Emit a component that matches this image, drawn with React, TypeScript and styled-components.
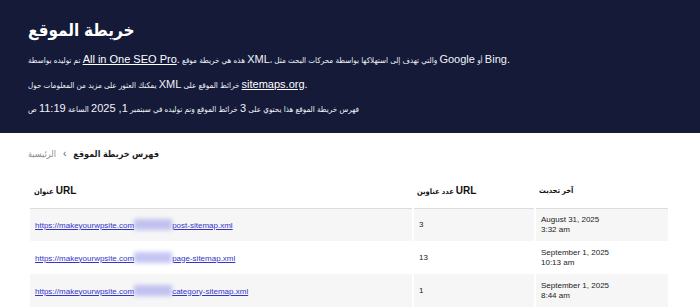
import styled, { createGlobalStyle } from "styled-components";

const GlobalStyle = createGlobalStyle`
  html, body {
    margin: 0;
    padding: 0;
    background: #ffffff;
  }
  body {
    font-family: "Liberation Sans", "DejaVu Sans Condensed", "DejaVu Sans", Arial, sans-serif;
    font-stretch: condensed;
    color: #1d1d1d;
  }
`;

type SitemapRow = {
  slug: string;
  count: number;
  date: string;
  time: string;
};

const rows: SitemapRow[] = [
  { slug: "post-sitemap.xml", count: 3, date: "August 31, 2025", time: "3:32 am" },
  { slug: "page-sitemap.xml", count: 13, date: "September 1, 2025", time: "10:13 am" },
  { slug: "category-sitemap.xml", count: 1, date: "September 1, 2025", time: "8:44 am" }
];

const Page = styled.div`
  width: 700px;
  height: 308px;
  overflow: hidden;
`;

const Hero = styled.header`
  box-sizing: border-box;
  height: 133px;
  padding: 19px 28px 0;
  background: #141a38;
  color: #f2f3f8;
`;

const Title = styled.h1`
  margin: 0 0 5px;
  font-size: 17px;
  line-height: 24px;
  font-weight: 700;
  color: #ffffff;
`;

const Lead = styled.p`
  margin: 0;
  font-size: 8px;
  line-height: 22.5px;
  direction: ltr;
  white-space: nowrap;
`;

/* latin runs inside arabic copy are set larger, as in the original */
const Latin = styled.span<{ $size?: number }>`
  font-size: ${(p) => p.$size ?? 11}px;
`;

const HeroLink = styled.a`
  color: #ffffff;
  text-decoration: underline;
  font-size: 11px;
`;

const Main = styled.main`
  padding: 14px 32px 0 30px;
`;

const Crumbs = styled.nav`
  display: flex;
  align-items: center;
  gap: 7px;
  height: 14px;
  margin: 0 0 12px -2px;
  font-size: 9px;
`;

const CrumbHome = styled.span`
  color: #8a8a8a;
`;

const CrumbSep = styled.span`
  color: #555;
  font-size: 10px;
  line-height: 1;
  margin-top: -1px;
`;

const CrumbCurrent = styled.span`
  color: #1d1d1d;
  font-weight: 700;
`;

const Table = styled.table`
  width: 100%;
  border-collapse: collapse;
  table-layout: fixed;
`;

const HeadCell = styled.th<{ $w: number }>`
  box-sizing: border-box;
  width: ${(p) => p.$w}px;
  height: 35px;
  padding: 0 4px;
  text-align: left;
  font-size: 7.5px;
  font-weight: 700;
  color: #111;
  border-bottom: 1px solid #dcdcdc;
  vertical-align: middle;
`;

const BodyRow = styled.tr<{ $striped: boolean }>`
  background: ${(p) => (p.$striped ? "#f6f6f6" : "#ffffff")};
`;

const Cell = styled.td`
  height: 33px;
  box-sizing: border-box;
  padding: 0 4px 0 5px;
  font-size: 8px;
  line-height: 10px;
  color: #222;
  vertical-align: middle;

  & + & {
    border-left: 2px solid #ffffff;
  }
`;

const UrlLink = styled.a`
  color: #3535c8;
  text-decoration: underline;
  white-space: nowrap;
`;

const Blurred = styled.span`
  display: inline-block;
  width: 38px;
  height: 11px;
  vertical-align: -2px;
  background: rgba(150, 150, 235, 0.55);
  filter: blur(2px);
`;

export default function App() {
  return (
    <Page>
      <GlobalStyle />
      <Hero>
        <Title>خريطة الموقع</Title>
        <Lead>
          تم توليده بواسطة <HeroLink href="#">All in One SEO Pro</HeroLink>
          <Latin>.</Latin> هذه هي خريطة موقع <Latin>XML</Latin>، والتي تهدف إلى استهلاكها بواسطة محركات البحث مثل{" "}
          <Latin>Google</Latin> أو <Latin>Bing.</Latin>
        </Lead>
        <Lead>
          يمكنك العثور على مزيد من المعلومات حول <Latin>XML</Latin> خرائط الموقع على{" "}
          <HeroLink href="#">sitemaps.org</HeroLink>
          <Latin>.</Latin>
        </Lead>
        <Lead>
          فهرس خريطة الموقع هذا يحتوي على <Latin>3</Latin> خرائط الموقع وتم توليده في سبتمبر <Latin>1, 2025</Latin>{" "}
          الساعة <Latin>11:19</Latin> ص
        </Lead>
      </Hero>
      <Main>
        <Crumbs>
          <CrumbHome>الرئيسية</CrumbHome>
          <CrumbSep>‹</CrumbSep>
          <CrumbCurrent>فهرس خريطة الموقع</CrumbCurrent>
        </Crumbs>
        <Table>
          <thead>
            <tr>
              <HeadCell $w={383}>
                عنوان <Latin $size={10}>URL</Latin>
              </HeadCell>
              <HeadCell $w={122}>
                عدد عناوين <Latin $size={10}>URL</Latin>
              </HeadCell>
              <HeadCell $w={133}>آخر تحديث</HeadCell>
            </tr>
          </thead>
          <tbody>
            {rows.map((row, i) => (
              <BodyRow key={row.slug} $striped={i % 2 === 0}>
                <Cell>
                  <UrlLink href="#">
                    https://makeyourwpsite.com
                    <Blurred />
                    {row.slug}
                  </UrlLink>
                </Cell>
                <Cell>{row.count}</Cell>
                <Cell>
                  {row.date}
                  <br />
                  {row.time}
                </Cell>
              </BodyRow>
            ))}
          </tbody>
        </Table>
      </Main>
    </Page>
  );
}
